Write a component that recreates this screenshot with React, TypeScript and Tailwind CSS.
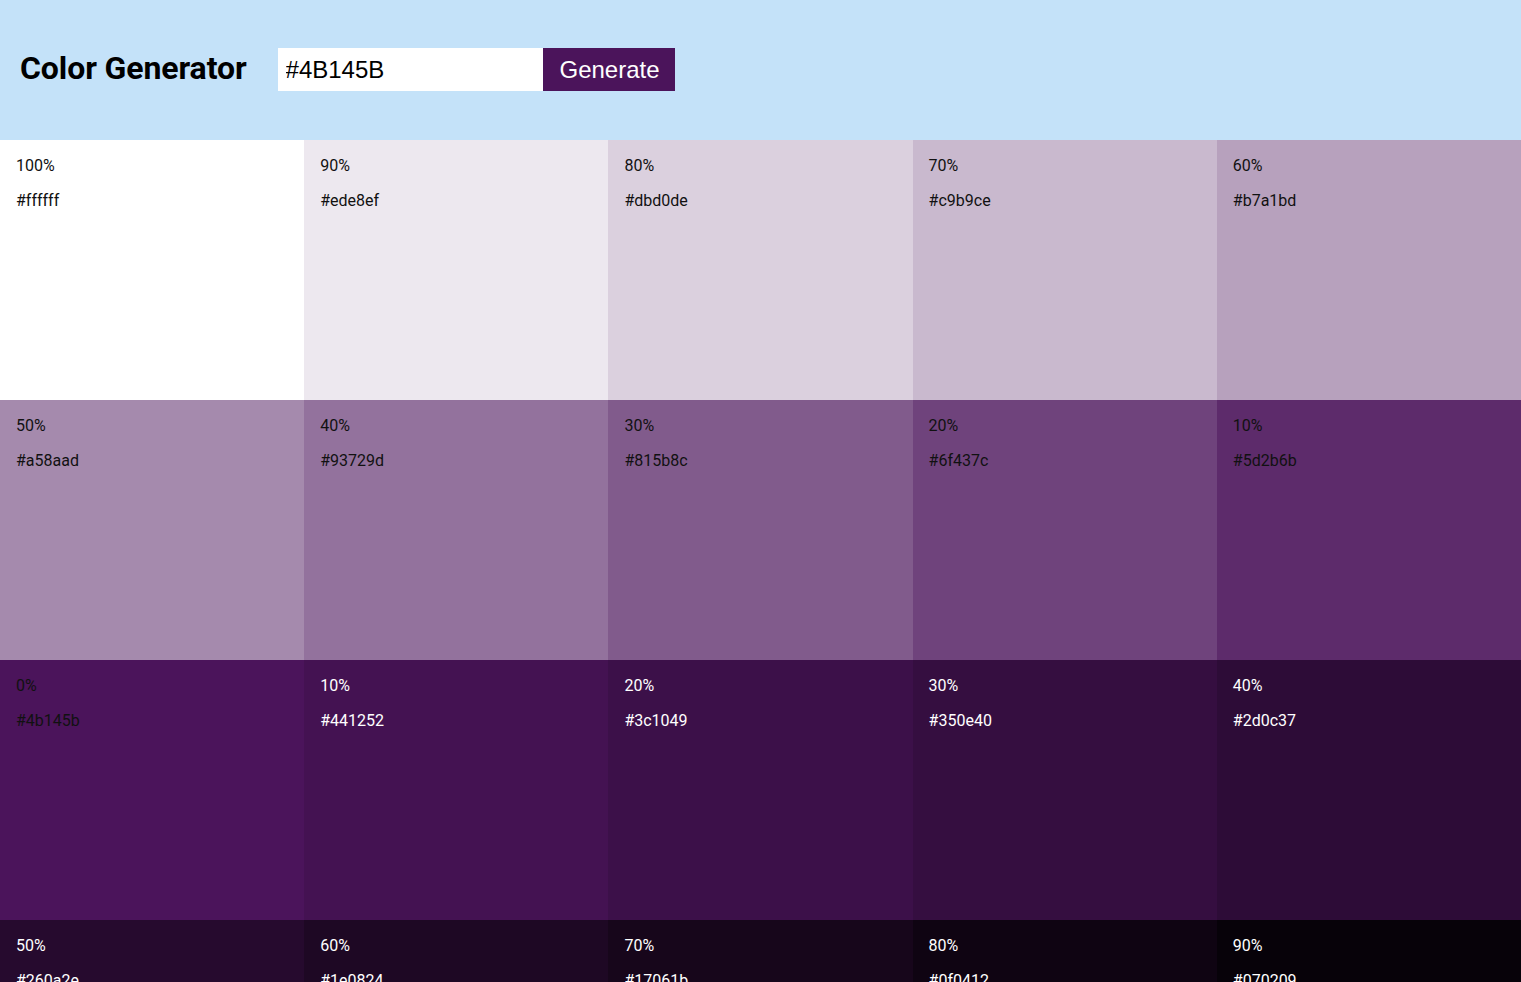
import { useState } from "react";

const colors = [
	{ weight: 100, hex: "ffffff" },
	{ weight: 90, hex: "ede8ef" },
	{ weight: 80, hex: "dbd0de" },
	{ weight: 70, hex: "c9b9ce" },
	{ weight: 60, hex: "b7a1bd" },
	{ weight: 50, hex: "a58aad" },
	{ weight: 40, hex: "93729d" },
	{ weight: 30, hex: "815b8c" },
	{ weight: 20, hex: "6f437c" },
	{ weight: 10, hex: "5d2b6b" },
	{ weight: 0, hex: "4b145b" },
	{ weight: 10, hex: "441252" },
	{ weight: 20, hex: "3c1049" },
	{ weight: 30, hex: "350e40" },
	{ weight: 40, hex: "2d0c37" },
	{ weight: 50, hex: "260a2e" },
	{ weight: 60, hex: "1e0824" },
	{ weight: 70, hex: "17061b" },
	{ weight: 80, hex: "0f0412" },
	{ weight: 90, hex: "070209" },
	{ weight: 100, hex: "000000" },
];

function SingleColor({ weight, hex, index }: { weight: number; hex: string; index: number }) {
	return (
		<article
			className={`h-[260px] px-4 pt-[14px] text-[16px] leading-6 ${index > 10 ? "text-white" : "text-[#111]"}`}
			style={{ backgroundColor: `#${hex}` }}
		>
			<p>{weight}%</p>
			<p className="mt-[11px]">#{hex}</p>
		</article>
	);
}

export default function App() {
	const [color, setColor] = useState("#4B145B");

	return (
		<main className="min-h-screen bg-white" style={{ fontFamily: "Roboto, 'Liberation Sans', sans-serif" }}>
			<section className="h-[140px] bg-[#c4e2f9] flex items-start pt-[48px] px-5">
				<h3 className="text-[32px] font-bold text-black mr-[31px] mt-[-1px] leading-[43px] tracking-[-0.1px]">Color Generator</h3>
				<form className="flex" onSubmit={(e) => e.preventDefault()}>
					<input
						type="text"
						value={color}
						onChange={(e) => setColor(e.target.value)}
						className="w-[265px] h-[43px] bg-white px-2 text-[24px] text-black outline-none font-['Liberation_Sans',Arial,sans-serif]"
					/>
					<button
						type="submit"
						className="w-[132px] h-[43px] pl-[2px] bg-[#4b145b] text-white text-[24px] font-['Liberation_Sans',Arial,sans-serif]"
					>
						Generate
					</button>
				</form>
			</section>
			<section className="grid grid-cols-5">
				{colors.map((c, index) => (
					<SingleColor key={index} weight={c.weight} hex={c.hex} index={index} />
				))}
			</section>
		</main>
	);
}
